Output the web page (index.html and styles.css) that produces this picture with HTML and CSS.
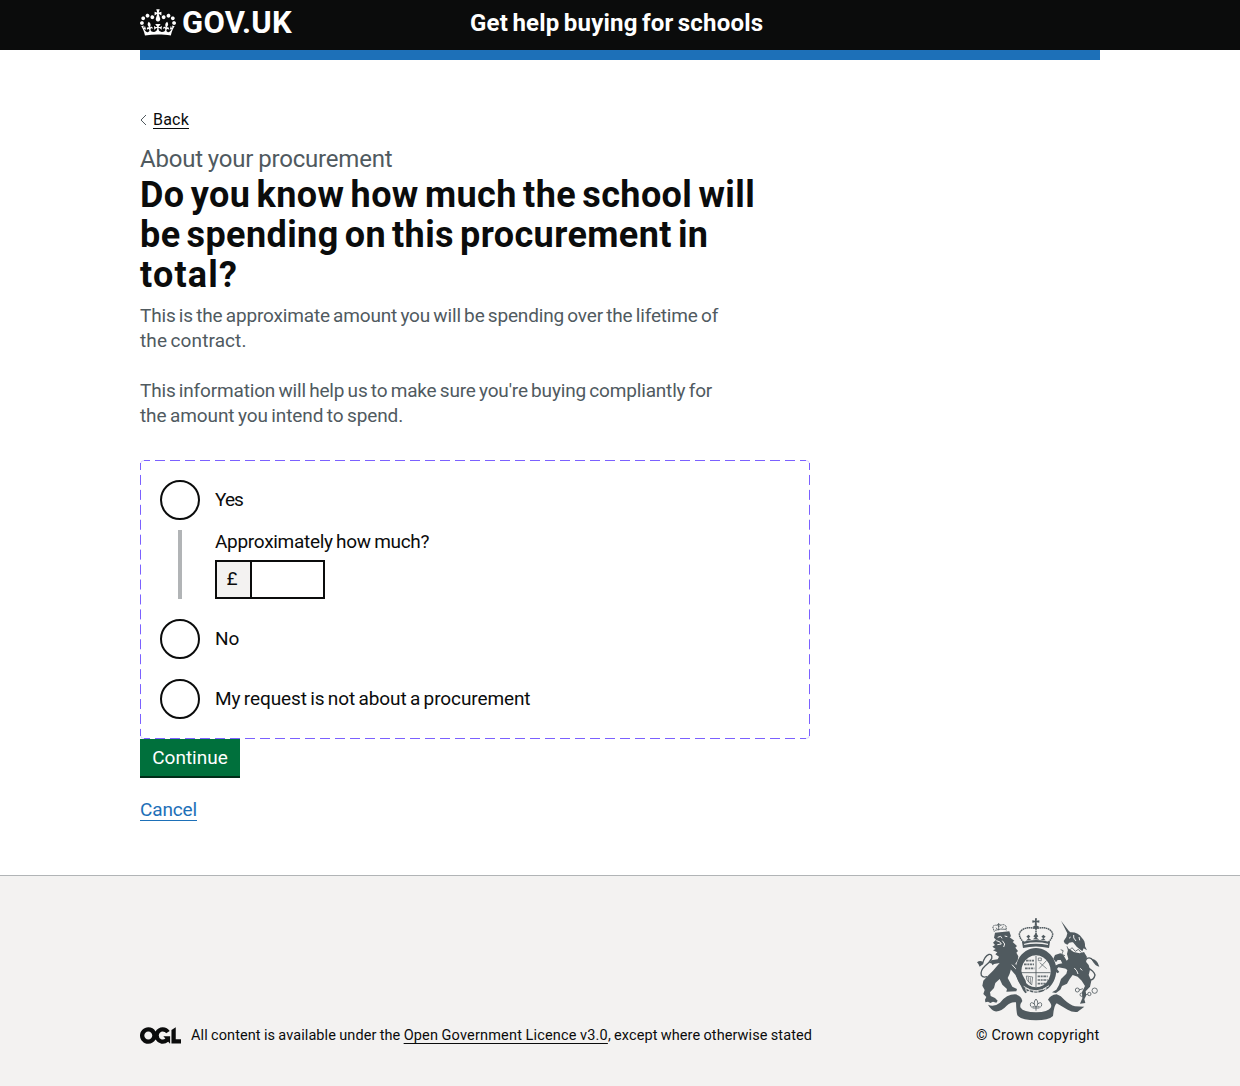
FILE: index.html
```html
<!DOCTYPE html>
<html lang="en">
<head>
<meta charset="utf-8">
<title>Get help buying for schools</title>
<link rel="stylesheet" href="styles.css">
</head>
<body>
<header class="header">
  <div class="container header-inner">
    <div class="logo">
      <svg class="crown" viewBox="0 0 132 97" fill="currentColor" aria-hidden="true"><path d="M25 30.2c3.5 1.5 7.7-.2 9.1-3.7 1.5-3.6-.2-7.8-3.9-9.2-3.6-1.4-7.6.3-9.1 3.9-1.4 3.5.3 7.5 3.9 9zM9 39.5c3.6 1.5 7.8-.2 9.2-3.7 1.5-3.6-.2-7.8-3.9-9.1-3.6-1.5-7.6.2-9.1 3.8-1.4 3.5.3 7.5 3.8 9zM4.4 57.2c3.5 1.5 7.7-.2 9.1-3.8 1.5-3.6-.2-7.7-3.9-9.1-3.5-1.5-7.6.3-9.1 3.8-1.4 3.5.3 7.6 3.9 9.1zm38.3-21.4c3.5 1.5 7.7-.2 9.1-3.8 1.5-3.6-.2-7.7-3.9-9.1-3.6-1.5-7.6.3-9.1 3.8-1.3 3.6.4 7.7 3.9 9.1zm64.4-5.6c-3.6 1.5-7.8-.2-9.1-3.7-1.5-3.6.2-7.8 3.8-9.2 3.6-1.4 7.7.3 9.2 3.9 1.3 3.5-.4 7.5-3.9 9zm15.9 9.3c-3.6 1.5-7.7-.2-9.1-3.7-1.5-3.6.2-7.8 3.7-9.1 3.6-1.5 7.7.2 9.2 3.8 1.5 3.5-.3 7.5-3.8 9zm4.7 17.7c-3.6 1.5-7.8-.2-9.2-3.8-1.5-3.6.2-7.7 3.9-9.1 3.6-1.5 7.7.3 9.2 3.8 1.3 3.5-.4 7.6-3.9 9.1zM89.3 35.8c-3.6 1.5-7.8-.2-9.2-3.8-1.4-3.6.2-7.7 3.9-9.1 3.6-1.5 7.7.3 9.2 3.8 1.4 3.6-.3 7.7-3.9 9.1zM69.7 17.7l8.9 4.7V9.3l-8.9 2.8c-.2-.3-.5-.6-.9-.9L72.4 0H59.6l3.5 11.2c-.3.3-.6.5-.9.9l-8.8-2.8v13.1l8.8-4.7c.3.3.6.7.9.9l-5 15.4v.1c-.2.8-.4 1.6-.4 2.4 0 4.1 3.1 7.5 7 8.1h.2c.3 0 .7.1 1 .1.4 0 .7 0 1-.1h.2c4-.6 7.1-4.1 7.1-8.1 0-.8-.1-1.7-.4-2.4V34l-5.1-15.4c.4-.2.7-.6 1-.9zM66 92.8c16.9 0 32.8 1.1 47.1 3.2 4-16.9 8.9-26.7 14-33.5l-9.6-3.4c1 4.9 1.1 7.2 0 10.2-1.5-1.4-3-4.3-4.2-8.7L108.6 76c2.8-2 5-3.2 7.5-3.3-4.4 9.4-10 11.9-13.6 11.2-4.3-.8-6.3-4.6-5.6-7.9 1-4.7 5.7-5.9 8-.5 4.3-8.7-3-11.4-7.6-8.8 7.1-7.2 7.9-13.5 2.1-21.1-8 6.1-8.1 12.3-4.5 20.8-4.7-5.4-12.1-2.5-9.5 6.2 3.4-5.2 7.9-2 7.2 3.1-.6 4.3-6.4 7.8-13.5 7.2-10.3-.9-10.9-8-11.2-13.8 2.5-.5 7.1 1.8 11 7.3L80.2 60c-4.1 4.4-8 5.3-12.3 5.4 1.4-4.4 8-11.6 8-11.6H55.5s6.4 7.2 7.9 11.6c-4.2-.1-8-1-12.3-5.4l1.4 16.4c3.9-5.5 8.5-7.7 10.9-7.3-.3 5.8-.9 12.8-11.1 13.8-7.2.6-12.9-2.9-13.5-7.2-.7-5 3.8-8.3 7.1-3.1 2.7-8.7-4.6-11.6-9.4-6.2 3.7-8.5 3.6-14.7-4.6-20.8-5.8 7.6-5 13.9 2.2 21.1-4.7-2.6-11.9.1-7.7 8.8 2.3-5.5 7.1-4.2 8.1.5.7 3.3-1.3 7.1-5.7 7.9-3.5.7-9-1.8-13.5-11.2 2.5.1 4.7 1.3 7.5 3.3l-4.7-15.4c-1.2 4.4-2.7 7.2-4.3 8.7-1.1-3-.9-5.3 0-10.2l-9.5 3.4c5 6.9 9.9 16.7 14 33.5 14.8-2.1 30.8-3.2 47.7-3.2z"/></svg>
      <span class="logo-text">GOV.UK</span>
    </div>
    <span class="service-name">Get help buying for schools</span>
  </div>
</header>
<div class="container"><div class="blue-bar"></div></div>
<main class="container main">
  <div class="back">
    <svg class="chevron" viewBox="0 0 7 12" fill="none" stroke="#505a5f" aria-hidden="true"><path d="M6 1 1 6l5 5"/></svg>
    <a class="back-link" href="#">Back</a>
  </div>
  <p class="caption">About your procurement</p>
  <h1 class="heading"><span class="line h-a">Do you know how much the school will</span> <span class="line h-b">be spending on this procurement in</span> <span class="line h-c">total?</span></h1>
  <p class="hint"><span class="line t-a">This is the approximate amount you will be spending over the lifetime of</span> <span class="line t-b">the contract.</span></p>
  <p class="hint"><span class="line t-c">This information will help us to make sure you're buying compliantly for</span> <span class="line t-d">the amount you intend to spend.</span></p>
  <form class="form">
    <div class="radios">
      <svg class="frame" viewBox="0 0 670 279" fill="none" stroke="#7b61ff" aria-hidden="true">
        <path d="M4 .5h662M4 278.5h662" stroke-dasharray="10 5" stroke-dashoffset="4"/>
        <path d="M.5 3v273M669.5 3v273" stroke-dasharray="10 4.94" stroke-dashoffset="3"/>
        <path d="M.5 4Q.5.5 4 .5M666 .5q3.5 0 3.5 3.5M.5 275q0 3.500 3.500 3.500M666 278.500q3.500 0 3.500-3.500" opacity=".25"/>
      </svg>
      <label class="radio"><span class="circle"></span><span class="r-yes">Yes</span></label>
      <div class="conditional">
        <span class="amount-label">Approximately how much?</span>
        <div class="amount"><span class="prefix">£</span><span class="field"></span></div>
      </div>
      <label class="radio"><span class="circle"></span><span class="r-no">No</span></label>
      <label class="radio"><span class="circle"></span><span class="r-not">My request is not about a procurement</span></label>
    </div>
    <button class="button" type="button">Continue</button>
  </form>
  <a class="cancel" href="#">Cancel</a>
</main>
<footer class="footer">
  <div class="container footer-inner">
    <div class="licence">
      <svg class="ogl" viewBox="0 0 483.2 195.7" fill="currentColor" aria-hidden="true"><path d="M421.5 142.8V.1l-50.7 32.3v161.1h112.4v-50.7zm-122.3-9.6A47.12 47.12 0 0 1 221 97.8c0-26 21.1-47.1 47.1-47.1 16.7 0 31.4 8.7 39.7 21.8l42.7-27.2A97.63 97.63 0 0 0 268.1 0c-36.5 0-68.3 20.1-85.1 49.7A98 98 0 0 0 97.8 0C43.9 0 0 43.9 0 97.8s43.9 97.8 97.8 97.8c36.5 0 68.3-20.1 85.1-49.7a97.76 97.76 0 0 0 149.6 25.4l19.4 22.2h3v-87.8h-80l24.3 27.5zM97.8 145c-26 0-47.1-21.1-47.1-47.1s21.1-47.1 47.1-47.1 47.1 21.1 47.1 47.1S123.8 145 97.8 145"/></svg>
      <span class="licence-text">All content is available under the <a class="licence-link" href="#">Open Government Licence v3.0</a>, except where otherwise stated</span>
    </div>
    <div class="copyright">
      <svg class="crest" viewBox="30 23 375 309" aria-hidden="true">
        <!-- ribbon -->
        <path fill="#505a5f" d="M69 283Q86 292 105 277Q125 252 150 252Q168 255 172 272Q163 284 167 292Q175 305 213 306Q250 304 257 292Q263 284 249 268Q256 254 275 252Q288 256 298 268Q315 284 330 288L358 289L337 305Q322 307 308 298Q290 288 275 279Q267 284 264 317Q250 330 213 330Q170 330 157 315Q154 305 153 276Q138 273 125 286Q108 305 90 303Q78 299 69 283Z"/>
        <!-- lion -->
        <g fill="#505a5f">
          <path d="M90 67L133 63L138 78L134 81L148 91L143 95L156 107L151 112L159 122L154 127L160 138L158 150L150 162L138 176L134 190L128 203L135 216L142 229L156 236L154 243L124 244L126 236L112 223L104 206L91 218L87 233L75 246L77 257L90 263L98 271L94 277L84 274L76 278L69 274L61 276L60 268L64 260L55 251L59 239L52 226L55 211L68 197L84 181L98 165L104 158L87 161L83 165L79 159L72 158L79 150L98 147L102 139L91 132L97 126L84 120L92 116L82 109L90 104L84 97L93 88L87 82Z"/>
          <path d="M150 160L166 177L173 195L182 211L185 228L194 240L181 249L174 240L162 214L151 193L136 176Z"/>
          <path d="M36 156Q45 148 54 155Q58 161 44 169Q42 162 36 156Z"/>
        </g>
        <g fill="none" stroke="#505a5f">
          <path d="M88 64L83 49Q92 40 102 49Q114 38 123 47L124 60" stroke-width="3" stroke-dasharray="4 1.500"/>
          <path d="M101 38V60M96 43H107M90 60Q108 54 123 57M93 52L97 57M110 53L115 49" stroke-width="2.500"/>
          <path d="M52 162Q58 137 72 132Q83 131 80 145Q75 155 60 167Q45 181 49 195Q54 203 66 199" stroke-width="4"/>
        </g>
        <path fill="none" stroke="#f3f2f1" stroke-width="3" d="M98 81L107 78L111 84M119 77L127 79M94 91Q107 93 109 101L97 103M112 91L119 101L116 110M141 163L159 183L171 213"/>
        <!-- shield -->
        <path fill="#505a5f" fill-rule="evenodd" d="M213 113a61 67 0 1 1-.1 0zm0 22a44 48 0 1 0 .1 0z"/>
        <g fill="none" stroke="#505a5f">
          <path d="M169 187h87M213 137v93" stroke-width="2.500"/>
          <path d="M183 151h24M177 162h30M180 174h28M218 198h30M218 209h30M218 220h24" stroke-width="5" stroke-dasharray="8 2 5 2" opacity=".85"/>
          <path d="M220 143h9v8h-9zM222 175l23-25M224 157l21 18M184 197l19 3-3 24-15-17zM190 200v16M196 201v20" stroke-width="2"/>
        </g>
        <path fill="none" stroke="#f3f2f1" stroke-width="2.500" d="M176 228Q213 256 252 226M182 234l10 3 3 9-11-3zM206 242h13v7h-13zM235 236l8-3-2 9z"/>
        <!-- crown -->
        <g fill="#505a5f">
          <path d="M210 24h6l-1 7 8-1v7l-8-1 1 10h-7l1-10-8 1v-7l8 1z"/>
          <path fill-rule="evenodd" d="M171 95q42-12 84 0l-3 18q-39-9-78 0zm7 5l-1 4q36-8 72 0v-4q-36-8-71 0z"/>
          <path d="M183 91l7-7-6-5 6-6 6 5-5 6 8 4zM203 87l7-5-5-4 8-10 7 10-5 4 8 6zM227 88l8-4-6-5 6-6 7 6-6 5 6 6zM203 49l10-4 10 4-6 7h-8z"/>
        </g>
        <path fill="none" stroke="#505a5f" stroke-width="4.500" stroke-dasharray="5 1.500" d="M176 96Q157 76 166 64Q179 48 208 54M250 96Q269 76 260 64Q247 48 218 54M213 54V76"/>
        <!-- unicorn -->
        <g fill="#505a5f">
          <path d="M288 31L311 61L316 66Q340 65 351 83Q361 92 360 108L366 120L356 114L352 123L335 109L324 96Q313 94 307 103L299 99L296 92L304 80L307 69Z"/>
          <path d="M310 114L326 125L344 129L357 125L366 140L361 152L371 164L375 178L371 194L379 211L375 229L362 243L364 255L358 267L361 278L345 280L352 264L351 245L360 227L350 211L338 199L323 194L314 206L306 220L291 227L286 238L273 248L261 246L274 238L282 224L288 206L304 190L307 180L296 168L287 149L278 149L273 156L265 145L270 134L286 129L295 134L305 151L310 146L306 131Z"/>
          <path d="M300 157L281 161L270 166L267 178L277 189L283 185L276 176L280 171L304 175Z"/>
          <path d="M379 146Q396 145 403 169Q390 168 379 146Z"/>
        </g>
        <g fill="none" stroke="#505a5f">
          <path d="M385 151Q376 138 365 145Q356 157 367 172Q387 182 390 194Q386 212 370 209" stroke-width="4"/>
          <g stroke-width="2.500"><path d="M287 118Q299 120 293 126T300 136M306 108L311 122L321 112L331 123L340 117L349 127"/><circle cx="355" cy="175" r="6"/><circle cx="337" cy="239" r="6"/><circle cx="350" cy="253" r="5"/><circle cx="373" cy="251" r="5"/><circle cx="389" cy="241" r="8"/><path d="M342 239L354 235M356 254L368 252"/></g>
        </g>
        <g fill="none" stroke="#f3f2f1" stroke-width="3">
          <path d="M312 84L317 80M326 74Q323 83 333 92M342 80L344 90M345 174L352 180M328 173Q337 181 339 191"/>
          <circle cx="344" cy="214" r="4"/>
        </g>
        <!-- floral badge on the ribbon -->
        <path fill="none" stroke="#505a5f" stroke-width="2.500" d="M213 266q-11 12 0 25 11-13 0-25M208 281q-12-9-12 2t13 5M218 281q12-9 12 2t-13 5M203 293h20M213 291v10"/>
      </svg>
      <span class="copy-text">© Crown copyright</span>
    </div>
  </div>
</footer>
</body>
</html>
```
FILE: styles.css
```css
* { box-sizing: border-box; }
body { margin: 0; background: #fff; color: #0b0c0c; font: 19px/25px Roboto, "Liberation Sans", sans-serif; }
p, h1 { margin: 0; }
.line { display: block; white-space: nowrap; }
.container { width: 960px; margin: 0 auto; }
.header { height: 50px; background: #0b0c0c; color: #fff; }
.header-inner { display: flex; padding-top: 8px; }
.logo { display: flex; width: 330px; gap: 6px; }
.crown { width: 36px; height: 27px; margin-top: 1px; }
.logo-text { font-size: 31px; line-height: 30px; font-weight: 700; letter-spacing: .3px; }
.service-name { font-size: 24px; line-height: 30px; font-weight: 700; letter-spacing: .2px; word-spacing: -1.8px; }
.blue-bar { height: 10px; background: #1d70b8; }
.main { height: 815px; padding-top: 50px; }
.back { display: flex; align-items: center; height: 20px; gap: 6px; font-size: 16px; line-height: 17px; letter-spacing: .2px; }
.chevron { width: 7px; height: 12px; }
.back-link { color: #0b0c0c; text-decoration: none; border-bottom: 1px solid; }
.caption { margin-top: 14px; font-size: 24px; line-height: 30px; color: #505a5f; letter-spacing: -.2px; word-spacing: -.8px; }
.heading { font-size: 36px; line-height: 40px; font-weight: 700; margin: 1px 0 8px; }
.h-a { letter-spacing: .4px; word-spacing: -3.1px; }
.h-b { letter-spacing: .4px; word-spacing: -3.3px; }
.h-c { letter-spacing: 1.2px; }
.hint { color: #505a5f; margin-bottom: 25px; }
.t-a { letter-spacing: -.16px; word-spacing: -1.3px; }
.t-b { letter-spacing: .1px; word-spacing: -1.3px; }
.t-c { letter-spacing: -.17px; word-spacing: -1.25px; }
.t-d { letter-spacing: -.1px; word-spacing: -1.1px; }
.form { padding-top: 7px; }
.radios { position: relative; height: 279px; padding: 20px; }
.frame { position: absolute; inset: 0; width: 670px; height: 279px; }
.radio { display: flex; align-items: center; gap: 15px; height: 40px; margin-bottom: 20px; line-height: 23px; }
.radio span:last-child { padding-bottom: 2px; }
.r-yes { letter-spacing: -.9px; }
.r-not { letter-spacing: -.1px; word-spacing: -1.2px; }
.circle { width: 40px; height: 40px; border: 2px solid #0b0c0c; border-radius: 50%; }
.conditional { height: 69px; margin: -10px 0 20px 18px; border-left: 4px solid #b1b4b6; padding-left: 33px; }
.amount-label { display: block; height: 30px; line-height: 24px; letter-spacing: -.3px; word-spacing: -1px; }
.amount { display: flex; width: 110px; height: 39px; }
.prefix { width: 35px; border: 2px solid #0b0c0c; border-right: 0; background: #f3f2f1; text-align: center; line-height: 34px; padding-right: 3px; }
.field { flex: 1; border: 2px solid #0b0c0c; background: #fff; }
.button { display: block; width: 100px; height: 39px; padding: 0; border: 0; border-bottom: 2px solid #002d18; background: #00703c; color: #fff; font: inherit; }
.cancel { display: inline-block; margin-top: 20px; padding-top: 1px; line-height: 21px; color: #1d70b8; text-decoration: none; border-bottom: 1px solid; letter-spacing: -.15px; }
.footer { height: 211px; border-top: 1px solid #b1b4b6; background: #f3f2f1; font-size: 14.5px; line-height: 20px; }
.footer-inner { display: flex; justify-content: space-between; align-items: flex-end; height: 169px; }
.licence { display: flex; align-items: center; gap: 10px; height: 20px; }
.ogl { width: 41px; height: 17px; }
.licence-text { white-space: nowrap; padding-top: 2px; letter-spacing: .08px; word-spacing: -.4px; }
.licence-link { color: #0b0c0c; letter-spacing: .18px; text-decoration: underline; text-decoration-thickness: 1px; text-decoration-skip-ink: none; text-underline-offset: 3px; }
.copyright { display: flex; flex-direction: column; width: 124px; }
.crest { width: 125px; height: 103px; margin: 0 0 4px -1px; }
.copy-text { white-space: nowrap; letter-spacing: .2px; height: 20px; line-height: 22px; }
```
